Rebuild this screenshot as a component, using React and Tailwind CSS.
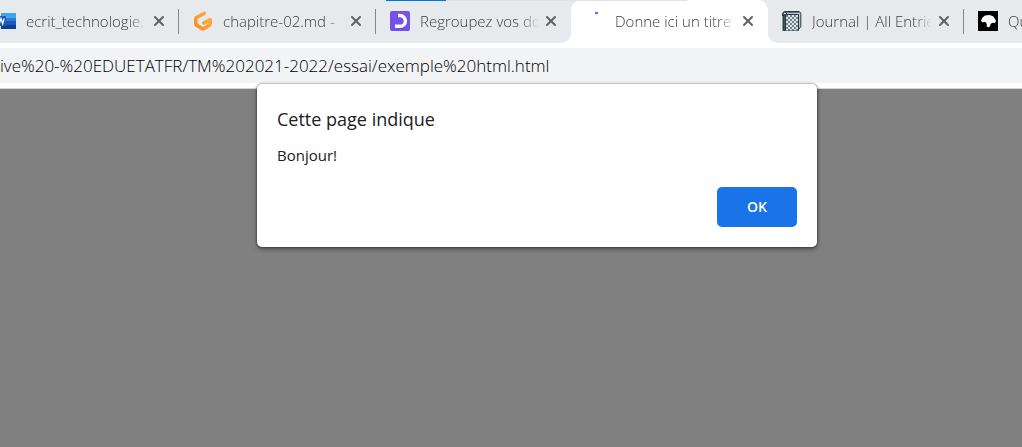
import { X } from 'lucide-react';

function WordIcon() {
  return (
    <svg viewBox="0 0 20 20" className="size-5 shrink-0" aria-hidden="true">
      <path d="M5 2h15v4.500H5z" fill="#41a5ee" />
      <path d="M5 6.500h15V10H5z" fill="#2b7cd3" />
      <path d="M5 10h15v4H5z" fill="#185abd" />
      <path d="M5 14h15v4H5z" fill="#103f91" />
      <rect x="0" y="5" width="10" height="10" rx="1" fill="#185abd" />
      <path d="M1.800 7.300l1.500 5.500L5 7.600l1.700 5.200 1.500-5.500" fill="none" stroke="#fff" strokeWidth="1.300" />
    </svg>
  );
}

function GitpodIcon() {
  return (
    <svg viewBox="0 0 20 20" className="size-5 shrink-0" aria-hidden="true">
      <defs>
        <linearGradient id="orange" x1="1" y1="0" x2="0" y2="1">
          <stop offset="0" stopColor="#ffb045" />
          <stop offset="1" stopColor="#ff8a20" />
        </linearGradient>
      </defs>
      <path
        d="M11.300 2.400L3.500 6.500Q2.800 6.900 2.800 7.700v5.200q0 .8.700 1.200l5.700 3.500q.8.400 1.600 0l5.700-3.500q.7-.4.700-1.200V8.600L10.800 12"
        fill="none"
        stroke="url(#orange)"
        strokeWidth="3.600"
        strokeLinecap="round"
        strokeLinejoin="round"
      />
    </svg>
  );
}

function PurpleIcon() {
  return (
    <svg viewBox="0 0 20 20" className="size-5 shrink-0" aria-hidden="true">
      <rect width="20" height="20" rx="2" fill="#7451eb" />
      <path d="M8 4.500h2a5.400 5.400 0 0 1 0 10.800H5" fill="none" stroke="#fff" strokeWidth="3.400" />
    </svg>
  );
}

function LoadingIcon() {
  return (
    <svg viewBox="0 0 20 20" className="size-5 shrink-0" aria-hidden="true">
      <path d="M11 2h1" stroke="#4285f4" strokeWidth="2.400" strokeLinecap="round" />
    </svg>
  );
}

function NotebookIcon() {
  return (
    <svg viewBox="0 0 20 20" className="size-5 shrink-0" aria-hidden="true">
      <defs>
        <pattern id="checks" width="4" height="4" patternUnits="userSpaceOnUse">
          <rect width="4" height="4" fill="#dbe5e9" />
          <path d="M0 0h2v2H0zM2 2h2v2H2z" fill="#71838c" />
        </pattern>
      </defs>
      <path d="M3 .7h14q1.800.300 1.800 2v13L17 18z" fill="#b9c5ca" stroke="#2a3a43" strokeWidth="1" />
      <path d="M.7 5Q.3 1 3.500.7H17" fill="none" stroke="#2a3a43" strokeWidth="1.400" />
      <rect x=".5" y="3" width="16.500" height="17" rx="1" fill="#2a3a43" />
      <rect x="4" y="4" width="12" height="15.500" fill="url(#checks)" />
      <path d="M2.300 4v15" stroke="#4c5d66" />
    </svg>
  );
}

function BlackIcon() {
  return (
    <svg viewBox="0 0 20 20" className="size-5 shrink-0" aria-hidden="true">
      <rect width="20" height="20" fill="#000" />
      <path d="M3 9.800L4.500 6.500 7 4.500l4.500-.5L15 5.300 17 8l1 2-1 2-2.500-.2L12.500 13l-.3 2-1.700 1.500-1.800-1 .1-2.500L7.500 11 4.300 11.200z" fill="#fff" />
    </svg>
  );
}

function Tab({ icon, title, active = false, separator = false, className = 'w-[197px]' }) {
  return (
    <div className={`shrink-0 bg-[#e7eaed] ${className}`}>
      <div
        className={`flex h-full items-center pr-3 pb-px pl-3.5 ${active ? 'rounded-t-[10px] bg-white' : ''} ${
          separator ? 'relative after:absolute after:top-[9px] after:right-0 after:h-[25px] after:w-px after:bg-[#85888c]' : ''
        }`}
      >
        {icon}
        <a
          href="#"
          className="ml-2.5 min-w-0 flex-1 overflow-hidden whitespace-nowrap mask-r-from-85% mask-r-to-100% pb-px text-[15px] leading-5 font-light text-[#3c4043]"
        >
          {title}
        </a>
        <button type="button" aria-label={`Fermer ${title}`} className="ml-1 text-[#5f6368]">
          <X className="size-4" strokeWidth={3} />
        </button>
      </div>
    </div>
  );
}

export default function App() {
  return (
    <div className="relative flex min-h-screen flex-col overflow-hidden bg-[#808080] font-['Open_Sans','Noto_Sans',sans-serif]">
      <nav aria-label="Onglets" className="relative flex h-[43px] overflow-hidden bg-white">
        <Tab icon={<WordIcon />} title="ecrit_technologie." separator className="-ml-[18px] w-[197px]" />
        <Tab icon={<GitpodIcon />} title="chapitre-02.md -" separator />
        <Tab icon={<PurpleIcon />} title="Regroupez vos do" className="w-[195px] rounded-br-[10px]" />
        <Tab icon={<LoadingIcon />} title="Donne ici un titre" active />
        <div className="flex flex-1 rounded-bl-[10px] bg-[#e7eaed]">
          <Tab icon={<NotebookIcon />} title="Journal | All Entrie" separator className="w-[196px] rounded-bl-[10px]" />
          <Tab icon={<BlackIcon />} title="Qu" />
        </div>
        <div className="absolute top-0 left-[386px] h-px w-[60px] bg-[#0078d7]" />
        <div className="absolute top-0 left-[446px] h-px w-[241px] bg-[#e2e2e2]" />
      </nav>
      <header className="border-b border-[#d5d7d9] bg-white py-[5px]">
        <input
          type="text"
          aria-label="Adresse"
          defaultValue="ive%20-%20EDUETATFR/TM%202021-2022/essai/exemple%20html.html"
          className="block h-[35px] w-full bg-[#f1f3f4] text-[17px] font-light text-black outline-none"
        />
      </header>
      <div
        role="dialog"
        aria-labelledby="dialog-title"
        className="absolute top-[84px] left-[257px] flex w-[560px] flex-col rounded-[5px] bg-white p-5 shadow-[0_0_1px_1px_rgba(0,0,0,0.2),0_2px_5px_rgba(0,0,0,0.45)]"
      >
        <h1 id="dialog-title" className="text-lg leading-[30px] text-[#202124]">Cette page indique</h1>
        <p className="mt-[11px] text-[15px] leading-5 text-[#202124]">Bonjour!</p>
        <button type="button" className="mt-[22px] h-10 w-20 self-end rounded-[5px] bg-[#1a73e8] text-sm font-semibold text-white">
          OK
        </button>
      </div>
    </div>
  );
}
